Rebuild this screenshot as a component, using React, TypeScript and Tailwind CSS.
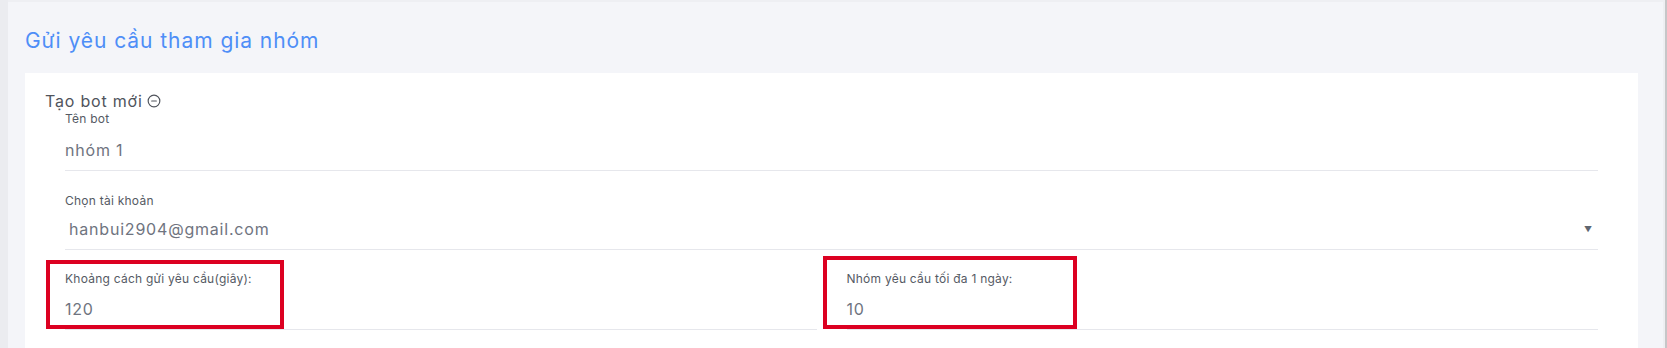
import { MinusCircle } from "lucide-react";

const FONT = "font-['Inter','Noto_Sans',sans-serif]";

function Field({
  label,
  value,
  gap = "mt-[11px]",
  indent = "",
  select = false,
}: {
  label: string;
  value: string;
  gap?: string;
  indent?: string;
  select?: boolean;
}) {
  return (
    <div>
      <div className="text-[12px] leading-4 tracking-[0.02em] text-[#555a64]">{label}</div>
      <div className={`${gap} flex items-center border-b border-[#e6e7ec] pb-2`}>
        <span className={`flex-1 text-[16px] leading-6 tracking-[0.05em] text-[#6f7480] ${indent}`}>
          {value}
        </span>
        {select && <span className="mr-[6px] text-[8px] leading-none text-[#5f6670]">▼</span>}
      </div>
    </div>
  );
}

export default function App() {
  return (
    <div className={`${FONT} flex h-[348px] w-full overflow-hidden bg-[#f4f5f9]`}>
      <div className="w-2 shrink-0 bg-[#ebecf0]" />
      <div className="flex-1 border-t-2 border-[#eeeff3]">
        <h1 className="pl-[17px] pt-[24px] text-[21px] font-normal leading-[30px] tracking-[0.045em] text-[#4e8ef7]">
          Gửi yêu cầu tham gia nhóm
        </h1>
        <div className="ml-[17px] mr-[25px] mt-[17px] h-[300px] bg-white px-5 pt-4">
          <div className="flex items-center gap-1 text-[16px] leading-6 tracking-[0.05em] text-[#50545c]">
            Tạo bot mới
            <MinusCircle className="h-[14px] w-[14px] text-[#50545c]" strokeWidth={2} />
          </div>
          <div className="pl-5 pr-[20px]">
            <div className="-mt-[2px]">
              <Field label="Tên bot" value="nhóm 1" />
            </div>
            <div className="mt-[22px]">
              <Field label="Chọn tài khoản" value="hanbui2904@gmail.com" gap="mt-[8px]" indent="pl-1" select />
            </div>
            <div className="mt-[21px] grid grid-cols-2 gap-[30px]">
              <div className="relative">
                <Field label="Khoảng cách gửi yêu cầu(giây):" value="120" gap="mt-[10px]" />
                <div className="absolute left-[-19px] top-[-11px] h-[69px] w-[238px] border-4 border-[#dc0021]" />
              </div>
              <div className="relative">
                <Field label="Nhóm yêu cầu tối đa 1 ngày:" value="10" gap="mt-[10px]" />
                <div className="absolute left-[-24px] top-[-15px] h-[73px] w-[254px] border-4 border-[#dc0021]" />
              </div>
            </div>
          </div>
        </div>
      </div>
      <div className="w-[4px] shrink-0 border-r-2 border-[#c6c6c8] bg-[#eeeff2]" />
    </div>
  );
}
